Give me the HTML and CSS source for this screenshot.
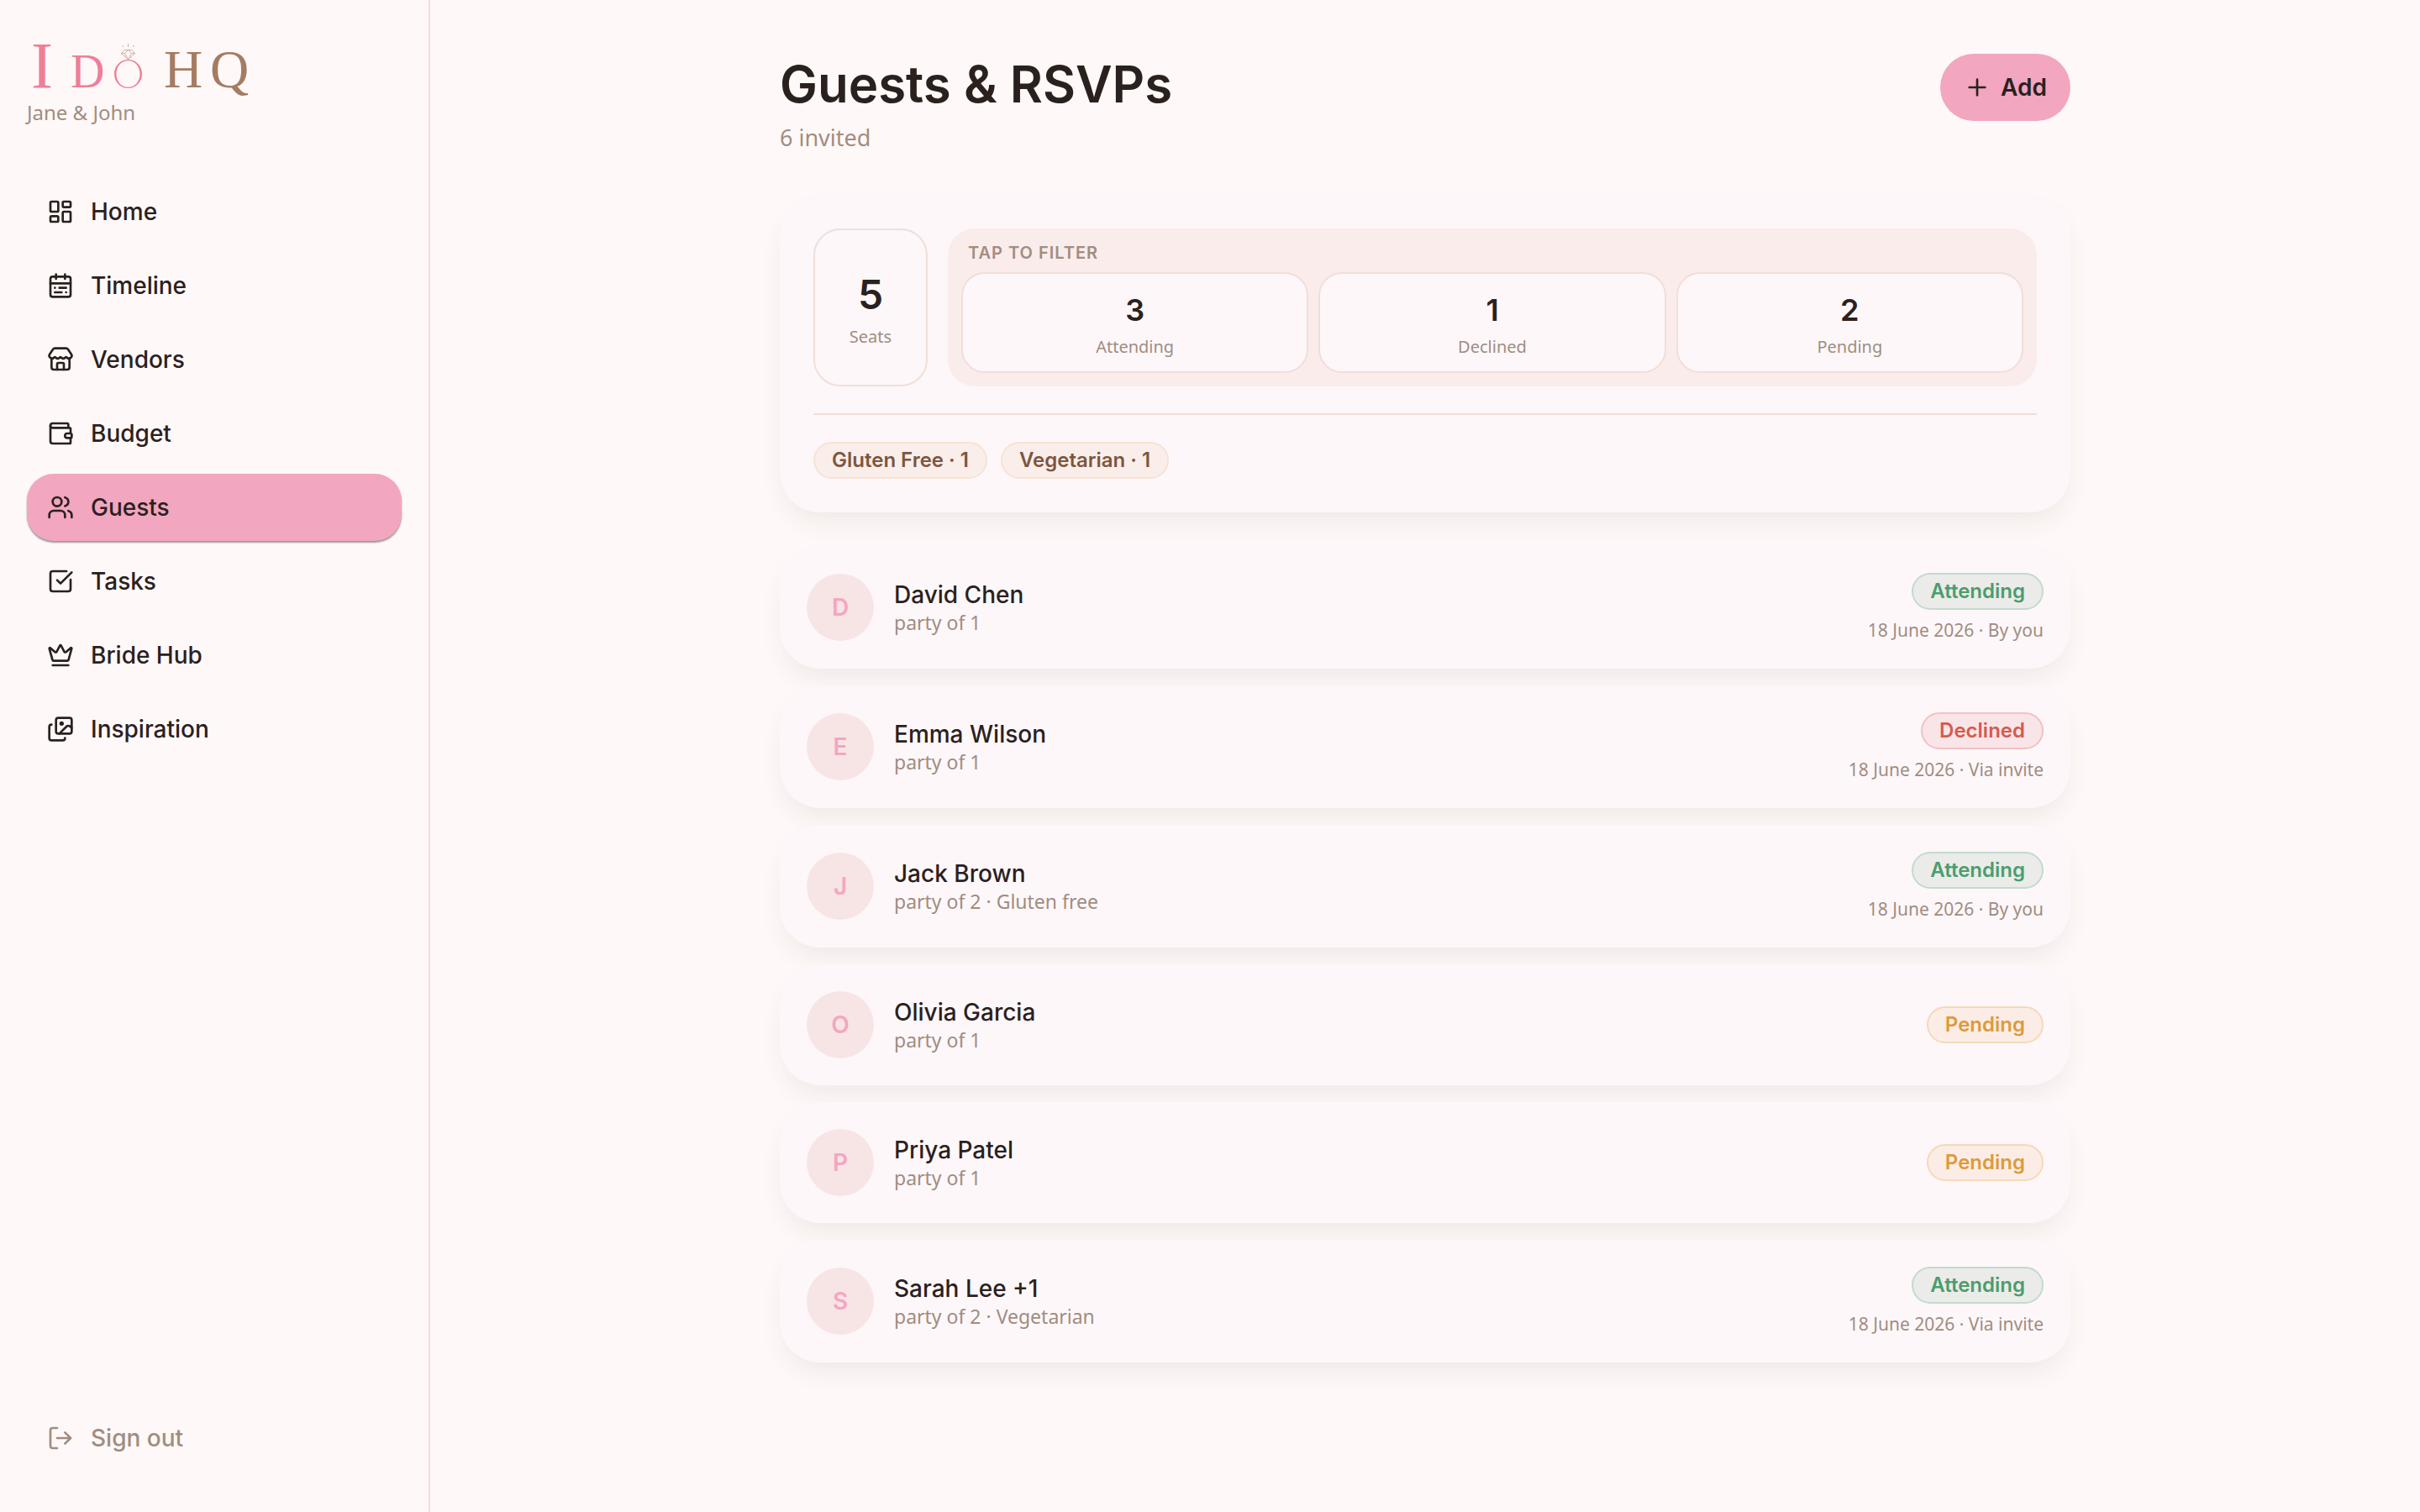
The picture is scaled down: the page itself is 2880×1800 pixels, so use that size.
FILE: index.html
```html
<!DOCTYPE html>
<html lang="en">
<head>
    <meta charset="UTF-8">
    <meta name="viewport" content="width=device-width, initial-scale=1.0">
    <title>Guests & RSVPs</title>
    <link rel="stylesheet" href="styles.css">
</head>
<body>
    <aside class="sidebar">
        <div class="brand">
            <svg class="logo" viewBox="0 0 280 72" role="img" aria-label="I Do HQ">
                <g class="logo-pink">
                    <text x="5" y="64" font-size="78">I</text>
                    <text x="52" y="64" font-size="56">D</text>
                </g>
                <path class="ring" fill-rule="evenodd" d="M120.500 31c9.500 0 16.500 7.500 16.500 17s-7 17-16.500 17-16.500-7.500-16.500-17 7-17 16.500-17zm0 1.200c-8 0-14 6.500-14 15.800s6 15.800 14 15.800 14-6.500 14-15.800-6-15.800-14-15.800z"/>
                <path class="diamond" d="M116 19.500h9l3.500 4-8 7.500-8-7.500zM112.500 23.500h4l4-4 4 4h4M116.500 23.500l4 7.500 4-7.500M120.500 12v4M113.500 14l1.500 2M127.500 14l-1.500 2"/>
                <g class="logo-brown">
                    <text x="163" y="64" font-size="64">H</text>
                    <text x="218" y="64" font-size="64">Q</text>
                </g>
            </svg>
            <p class="couple">Jane &amp; John</p>
        </div>

        <nav class="nav">
            <a class="nav-item" href="#">
                <svg class="icon" viewBox="0 0 24 24"><rect width="7" height="9" x="3" y="3" rx="1"/><rect width="7" height="5" x="14" y="3" rx="1"/><rect width="7" height="9" x="14" y="12" rx="1"/><rect width="7" height="5" x="3" y="16" rx="1"/></svg>
                Home
            </a>
            <a class="nav-item" href="#">
                <svg class="icon" viewBox="0 0 24 24"><rect width="18" height="18" x="3" y="4" rx="2"/><path d="M16 2v4M3 10h18M8 2v4M17 14h-6M13 18H7M7 14h.01M17 18h.01"/></svg>
                Timeline
            </a>
            <a class="nav-item" href="#">
                <svg class="icon" viewBox="0 0 24 24"><path d="M15 21v-5a1 1 0 0 0-1-1h-4a1 1 0 0 0-1 1v5"/><path d="M17.774 10.310a1.120 1.120 0 0 0-1.549 0 2.500 2.500 0 0 1-3.451 0 1.120 1.120 0 0 0-1.548 0 2.500 2.500 0 0 1-3.452 0 1.120 1.120 0 0 0-1.549 0 2.500 2.500 0 0 1-3.770-3.248l2.889-4.184A2 2 0 0 1 7 2h10a2 2 0 0 1 1.653.873l2.895 4.192a2.500 2.500 0 0 1-3.774 3.244"/><path d="M4 10.950V19a2 2 0 0 0 2 2h12a2 2 0 0 0 2-2v-8.050"/></svg>
                Vendors
            </a>
            <a class="nav-item" href="#">
                <svg class="icon" viewBox="0 0 24 24"><path d="M19 7V4a1 1 0 0 0-1-1H5a2 2 0 0 0 0 4h15a1 1 0 0 1 1 1v4h-3a2 2 0 0 0 0 4h3a1 1 0 0 0 1-1v-2a1 1 0 0 0-1-1"/><path d="M3 5v14a2 2 0 0 0 2 2h15a1 1 0 0 0 1-1v-4"/></svg>
                Budget
            </a>
            <a class="nav-item active" href="#" aria-current="page">
                <svg class="icon" viewBox="0 0 24 24"><path d="M16 21v-2a4 4 0 0 0-4-4H6a4 4 0 0 0-4 4v2"/><path d="M16 3.128a4 4 0 0 1 0 7.744"/><path d="M22 21v-2a4 4 0 0 0-3-3.870"/><circle cx="9" cy="7" r="4"/></svg>
                Guests
            </a>
            <a class="nav-item" href="#">
                <svg class="icon" viewBox="0 0 24 24"><path d="M21 10.656V19a2 2 0 0 1-2 2H5a2 2 0 0 1-2-2V5a2 2 0 0 1 2-2h12.344"/><path d="m9 11 3 3L22 4"/></svg>
                Tasks
            </a>
            <a class="nav-item" href="#">
                <svg class="icon" viewBox="0 0 24 24"><path d="M11.562 3.266a.5.5 0 0 1 .876 0L15.390 8.870a1 1 0 0 0 1.516.294L21.183 5.500a.5.5 0 0 1 .798.519l-2.834 10.246a1 1 0 0 1-.956.734H5.810a1 1 0 0 1-.957-.734L2.020 6.020a.5.5 0 0 1 .798-.519l4.276 3.664a1 1 0 0 0 1.516-.294z"/><path d="M5 21h14"/></svg>
                Bride Hub
            </a>
            <a class="nav-item" href="#">
                <svg class="icon" viewBox="0 0 24 24"><path d="m22 11-1.296-1.296a2.400 2.400 0 0 0-3.408 0L11 16"/><path d="M4 8a2 2 0 0 0-2 2v10a2 2 0 0 0 2 2h10a2 2 0 0 0 2-2"/><circle cx="13" cy="7" r="1" fill="currentColor"/><rect x="8" y="2" width="14" height="14" rx="2"/></svg>
                Inspiration
            </a>
        </nav>

        <button class="nav-item sign-out" type="button">
            <svg class="icon" viewBox="0 0 24 24"><path d="m16 17 5-5-5-5"/><path d="M21 12H9"/><path d="M9 21H5a2 2 0 0 1-2-2V5a2 2 0 0 1 2-2h4"/></svg>
            Sign out
        </button>
    </aside>

    <main class="main">
        <div class="content">
            <header class="page-header">
                <div>
                    <h1>Guests &amp; RSVPs</h1>
                    <p class="subtitle">6 invited</p>
                </div>
                <button class="add-button" type="button">
                    <svg class="icon" viewBox="0 0 24 24"><path d="M5 12h14M12 5v14"/></svg>
                    Add
                </button>
            </header>

            <section class="card summary">
                <div class="stats">
                    <div class="seats">
                        <span class="seats-count">5</span>
                        <span class="seats-label">Seats</span>
                    </div>
                    <div class="filter">
                        <p class="filter-title">Tap to filter</p>
                        <div class="filter-options">
                            <button class="filter-option" type="button"><span class="count">3</span><span class="label">Attending</span></button>
                            <button class="filter-option" type="button"><span class="count">1</span><span class="label">Declined</span></button>
                            <button class="filter-option" type="button"><span class="count">2</span><span class="label">Pending</span></button>
                        </div>
                    </div>
                </div>
                <div class="diets">
                    <span class="pill diet">Gluten Free · 1</span>
                    <span class="pill diet">Vegetarian · 1</span>
                </div>
            </section>

            <ul class="guests">
                <li class="card guest">
                    <span class="avatar">D</span>
                    <div class="guest-info"><p class="name">David Chen</p><p class="party">party of 1</p></div>
                    <div class="status"><span class="pill attending">Attending</span><span class="date">18 June 2026 · By you</span></div>
                </li>
                <li class="card guest">
                    <span class="avatar">E</span>
                    <div class="guest-info"><p class="name">Emma Wilson</p><p class="party">party of 1</p></div>
                    <div class="status"><span class="pill declined">Declined</span><span class="date">18 June 2026 · Via invite</span></div>
                </li>
                <li class="card guest">
                    <span class="avatar">J</span>
                    <div class="guest-info"><p class="name">Jack Brown</p><p class="party">party of 2 · Gluten free</p></div>
                    <div class="status"><span class="pill attending">Attending</span><span class="date">18 June 2026 · By you</span></div>
                </li>
                <li class="card guest">
                    <span class="avatar">O</span>
                    <div class="guest-info"><p class="name">Olivia Garcia</p><p class="party">party of 1</p></div>
                    <div class="status"><span class="pill pending">Pending</span></div>
                </li>
                <li class="card guest">
                    <span class="avatar">P</span>
                    <div class="guest-info"><p class="name">Priya Patel</p><p class="party">party of 1</p></div>
                    <div class="status"><span class="pill pending">Pending</span></div>
                </li>
                <li class="card guest">
                    <span class="avatar">S</span>
                    <div class="guest-info"><p class="name">Sarah Lee +1</p><p class="party">party of 2 · Vegetarian</p></div>
                    <div class="status"><span class="pill attending">Attending</span><span class="date">18 June 2026 · Via invite</span></div>
                </li>
            </ul>
        </div>
    </main>
</body>
</html>
```
FILE: styles.css
```css
* {
    box-sizing: border-box;
    margin: 0;
    padding: 0;
}

body {
    display: flex;
    min-height: 100vh;
    background: #fff8f8;
    color: #2a211e;
    font-family: 'Inter', sans-serif;
    font-size: 28px;
}

button {
    font: inherit;
    color: inherit;
    border: none;
    background: none;
    cursor: pointer;
}

.icon {
    width: 32px;
    height: 32px;
    flex-shrink: 0;
    fill: none;
    stroke: currentColor;
    stroke-width: 2;
    stroke-linecap: round;
    stroke-linejoin: round;
}

/* Sidebar */
.sidebar {
    display: flex;
    flex-direction: column;
    width: 512px;
    flex-shrink: 0;
    padding: 40px 32px 48px;
    border-right: 2px solid #f3ded9;
}

.brand {
    margin-bottom: 58px;
}

.logo {
    display: block;
    width: 280px;
    height: 72px;
    overflow: visible;
    font-family: 'Liberation Serif', serif;
}

.logo-pink {
    fill: #ee7f98;
}

.logo-brown {
    fill: #a57c62;
}

.ring {
    fill: #ee7f98;
}

.diamond {
    fill: none;
    stroke: #cfae9f;
    stroke-width: 1;
}

.couple {
    margin-top: 2px;
    color: #a08d80;
    font-family: 'Noto Sans', sans-serif;
    font-size: 24px;
    line-height: 40px;
}

.nav {
    display: flex;
    flex-direction: column;
    gap: 8px;
}

.nav-item {
    display: flex;
    align-items: center;
    gap: 20px;
    height: 80px;
    padding: 0 24px;
    border-radius: 32px;
    color: #2a211e;
    font-weight: 500;
    text-decoration: none;
}

.nav-item.active {
    background: #f2a6c0;
    box-shadow: 0 2px 2px rgba(0, 0, 0, 0.4);
}

.sign-out {
    margin-top: auto;
    color: #a08d80;
}

/* Main column */
.main {
    flex: 1;
    padding: 64px;
}

.content {
    max-width: 1536px;
    margin: 0 auto;
}

.page-header {
    display: flex;
    justify-content: space-between;
    align-items: flex-start;
    margin-bottom: 48px;
}

h1 {
    font-size: 60px;
    font-weight: 600;
    line-height: 72px;
}

.subtitle {
    margin-top: 8px;
    color: #a08d80;
    font-family: 'Noto Sans', sans-serif;
    font-size: 27px;
    line-height: 40px;
}

.add-button {
    display: flex;
    align-items: center;
    gap: 12px;
    height: 80px;
    padding: 0 28px;
    border-radius: 40px;
    background: #f2a6c0;
    font-weight: 600;
}

.card {
    border-radius: 48px;
    background: #fdf7fa;
    box-shadow: 0 16px 32px -8px rgba(60, 50, 35, 0.09);
}

.summary {
    padding: 40px;
}

.stats {
    display: flex;
    gap: 24px;
    padding-bottom: 32px;
    border-bottom: 2px solid #f1ded8;
}

.seats {
    display: flex;
    flex-direction: column;
    align-items: center;
    justify-content: center;
    width: 136px;
    padding-top: 6px;
    border: 2px solid #f1ded8;
    border-radius: 32px;
}

.seats-count {
    font-size: 48px;
    font-weight: 600;
    line-height: 60px;
}

.seats-label,
.label {
    color: #a08d80;
    font-family: 'Noto Sans', sans-serif;
    font-size: 20px;
    line-height: 32px;
}

.seats-label {
    margin-top: 4px;
}

.filter {
    flex: 1;
    padding: 16px;
    border-radius: 32px;
    background: #faeceb;
}

.filter-title {
    padding: 0 8px 10px;
    color: #a08d80;
    font-size: 20px;
    font-weight: 600;
    letter-spacing: 1px;
    line-height: 26px;
    text-transform: uppercase;
}

.filter-options {
    display: grid;
    grid-template-columns: repeat(3, 1fr);
    gap: 12px;
}

.filter-option {
    display: flex;
    flex-direction: column;
    align-items: center;
    justify-content: center;
    gap: 4px;
    height: 120px;
    padding-top: 6px;
    border: 2px solid #f1ded8;
    border-radius: 28px;
    background: #fdf7fa;
}

.count {
    font-size: 36px;
    font-weight: 600;
    line-height: 48px;
}

.diets {
    display: flex;
    gap: 16px;
    padding-top: 32px;
}

.pill {
    height: 44px;
    padding: 0 20px;
    border: 2px solid;
    border-radius: 22px;
    font-size: 24px;
    font-weight: 600;
    line-height: 40px;
}

.diet {
    background: #faeeeb;
    border-color: #f7e3d3;
    color: #7d5640;
}

.attending {
    background: #ebebe9;
    border-color: #c3dacd;
    color: #4a9d6e;
}

.declined {
    background: #f9e5e8;
    border-color: #f1c1c2;
    color: #d65a50;
}

.pending {
    background: #fbede6;
    border-color: #f5d9b8;
    color: #dd9a3c;
}

/* Guest list */
.guests {
    display: flex;
    flex-direction: column;
    gap: 20px;
    margin-top: 40px;
    list-style: none;
}

.guest {
    display: flex;
    align-items: center;
    gap: 24px;
    padding: 32px;
}

.avatar {
    display: flex;
    align-items: center;
    justify-content: center;
    width: 80px;
    height: 80px;
    border-radius: 50%;
    background: #f7e5e5;
    color: #f4a6c1;
    font-weight: 600;
}

.guest-info {
    flex: 1;
}

.name {
    font-weight: 500;
    line-height: 36px;
}

.party {
    color: #a08d80;
    font-family: 'Noto Sans', sans-serif;
    font-size: 23px;
    line-height: 30px;
}

.status {
    display: flex;
    flex-direction: column;
    align-items: flex-end;
    gap: 10px;
}

.date {
    color: #a08d80;
    font-family: 'Noto Sans', sans-serif;
    font-size: 21px;
    line-height: 28px;
}
```
